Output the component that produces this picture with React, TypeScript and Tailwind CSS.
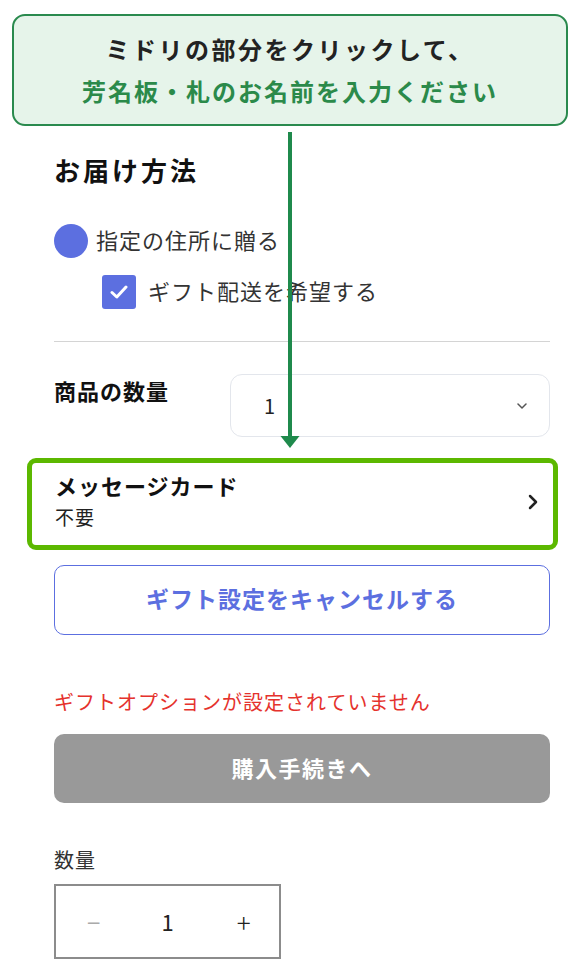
import { useState } from "react";

export default function App() {
    const [qty, setQty] = useState(1);

    return (
        <div className="relative w-[580px] h-[968px] overflow-hidden bg-white font-['Noto_Sans_CJK_JP','Noto_Sans',sans-serif] text-[#333]">
            {/* callout */}
            <div className="mx-[12px] mt-[14px] h-[112px] rounded-[13px] border-2 border-[#2a8a4e] bg-[#e6f4ea] flex flex-col items-center justify-center">
                <p className="text-[24px] font-bold leading-[42px] tracking-[2.5px] text-[#222]">ミドリの部分をクリックして、</p>
                <p className="text-[24px] font-bold leading-[42px] tracking-[2px] text-[#2b8a4a]">芳名板・札のお名前を入力ください</p>
            </div>

            <div className="pl-[54px] pr-[30px]">
                <h2 className="mt-[26px] h-[36px] leading-[36px] text-[26px] font-bold tracking-[3px] text-[#111]">お届け方法</h2>

                <div className="mt-[33px] h-[40px] flex items-center gap-[8px]">
                    <span className="w-[34px] h-[34px] rounded-full bg-[#5c6fe0]" />
                    <span className="text-[22px] tracking-[1px] pb-[3px]">指定の住所に贈る</span>
                </div>

                <div className="mt-[11px] h-[40px] pl-[48px] flex items-center gap-[12px]">
                    <span className="w-[34px] h-[34px] rounded-[3px] bg-[#5c6fe0] flex items-center justify-center">
                        <svg width="18" height="14" viewBox="0 0 18 14" fill="none">
                            <path d="M2 7.5 L6.8 12 L16 2" stroke="white" strokeWidth="3" strokeLinecap="round" strokeLinejoin="round" />
                        </svg>
                    </span>
                    <span className="text-[22px] tracking-[1px] pb-[3px]">ギフト配送を希望する</span>
                </div>

                <div className="mt-[29px] border-t border-[#d4d4d4]" />

                <div className="mt-[32px] flex">
                    <span className="w-[176px] leading-[32px] text-[22px] font-bold tracking-[1px] text-[#111]">商品の数量</span>
                    <div className="flex-1 h-[63px] rounded-[12px] border border-[#e3e6ec] flex items-center justify-between pl-[33px] pr-[22px]">
                        <span className="text-[20px] text-[#222]">1</span>
                        <svg width="10" height="6" viewBox="0 0 10 6" fill="none">
                            <path d="M1 1 L5 5 L9 1" stroke="#555" strokeWidth="1.5" strokeLinecap="round" strokeLinejoin="round" />
                        </svg>
                    </div>
                </div>
            </div>

            {/* message card (highlighted) */}
            <div className="ml-[27px] mr-[22px] mt-[21px] h-[92px] rounded-[9px] border-[5px] border-[#5cb800] flex items-start justify-between pl-[23px] pr-[15px]">
                <div className="pt-[8px]">
                    <p className="text-[22px] font-bold leading-[28px] tracking-[1px] text-[#111]">メッセージカード</p>
                    <p className="mt-[4px] text-[19px] leading-[28px] tracking-[1px] text-[#222]">不要</p>
                </div>
                <svg className="mt-[31px]" width="10" height="16" viewBox="0 0 10 16" fill="none">
                    <path d="M2 2 L8 8 L2 14" stroke="#222" strokeWidth="2.5" strokeLinecap="round" strokeLinejoin="round" />
                </svg>
            </div>

            <div className="pl-[54px] pr-[30px]">
                <button className="mt-[15px] w-full h-[70px] pb-[3px] rounded-[10px] border border-[#5c6fe0] text-[23px] font-bold tracking-[1px] text-[#5c6fe0]">
                    ギフト設定をキャンセルする
                </button>

                <p className="mt-[52px] leading-[30px] text-[20px] tracking-[1px] text-[#e5322d]">ギフトオプションが設定されていません</p>

                <button disabled className="mt-[17px] w-full h-[69px] pb-[3px] rounded-[10px] bg-[#999999] text-[22px] font-bold tracking-[1.5px] text-white">
                    購入手続きへ
                </button>

                <p className="mt-[42px] leading-[30px] text-[20px] tracking-[1px] text-[#333]">数量</p>

                <div className="mt-[9px] w-[227px] h-[75px] border-2 border-[#8c8c8c] grid grid-cols-3 items-center">
                    <button onClick={() => setQty(Math.max(1, qty - 1))} className="flex justify-center text-[24px] text-[#aaa] pl-[1px]">−</button>
                    <span className="text-center text-[22px] text-[#222]">{qty}</span>
                    <button onClick={() => setQty(qty + 1)} className="flex justify-center text-[26px] font-light text-[#222] pl-[4px]">+</button>
                </div>
            </div>

            {/* arrow overlay */}
            <svg className="absolute left-[280px] top-[132px]" width="20" height="316" viewBox="0 0 20 316" fill="none">
                <rect x="8" y="0" width="4" height="306" fill="#1f8a4c" />
                <path d="M0.5 304 L19.5 304 L10 316 Z" fill="#1f8a4c" />
            </svg>
        </div>
    );
}
